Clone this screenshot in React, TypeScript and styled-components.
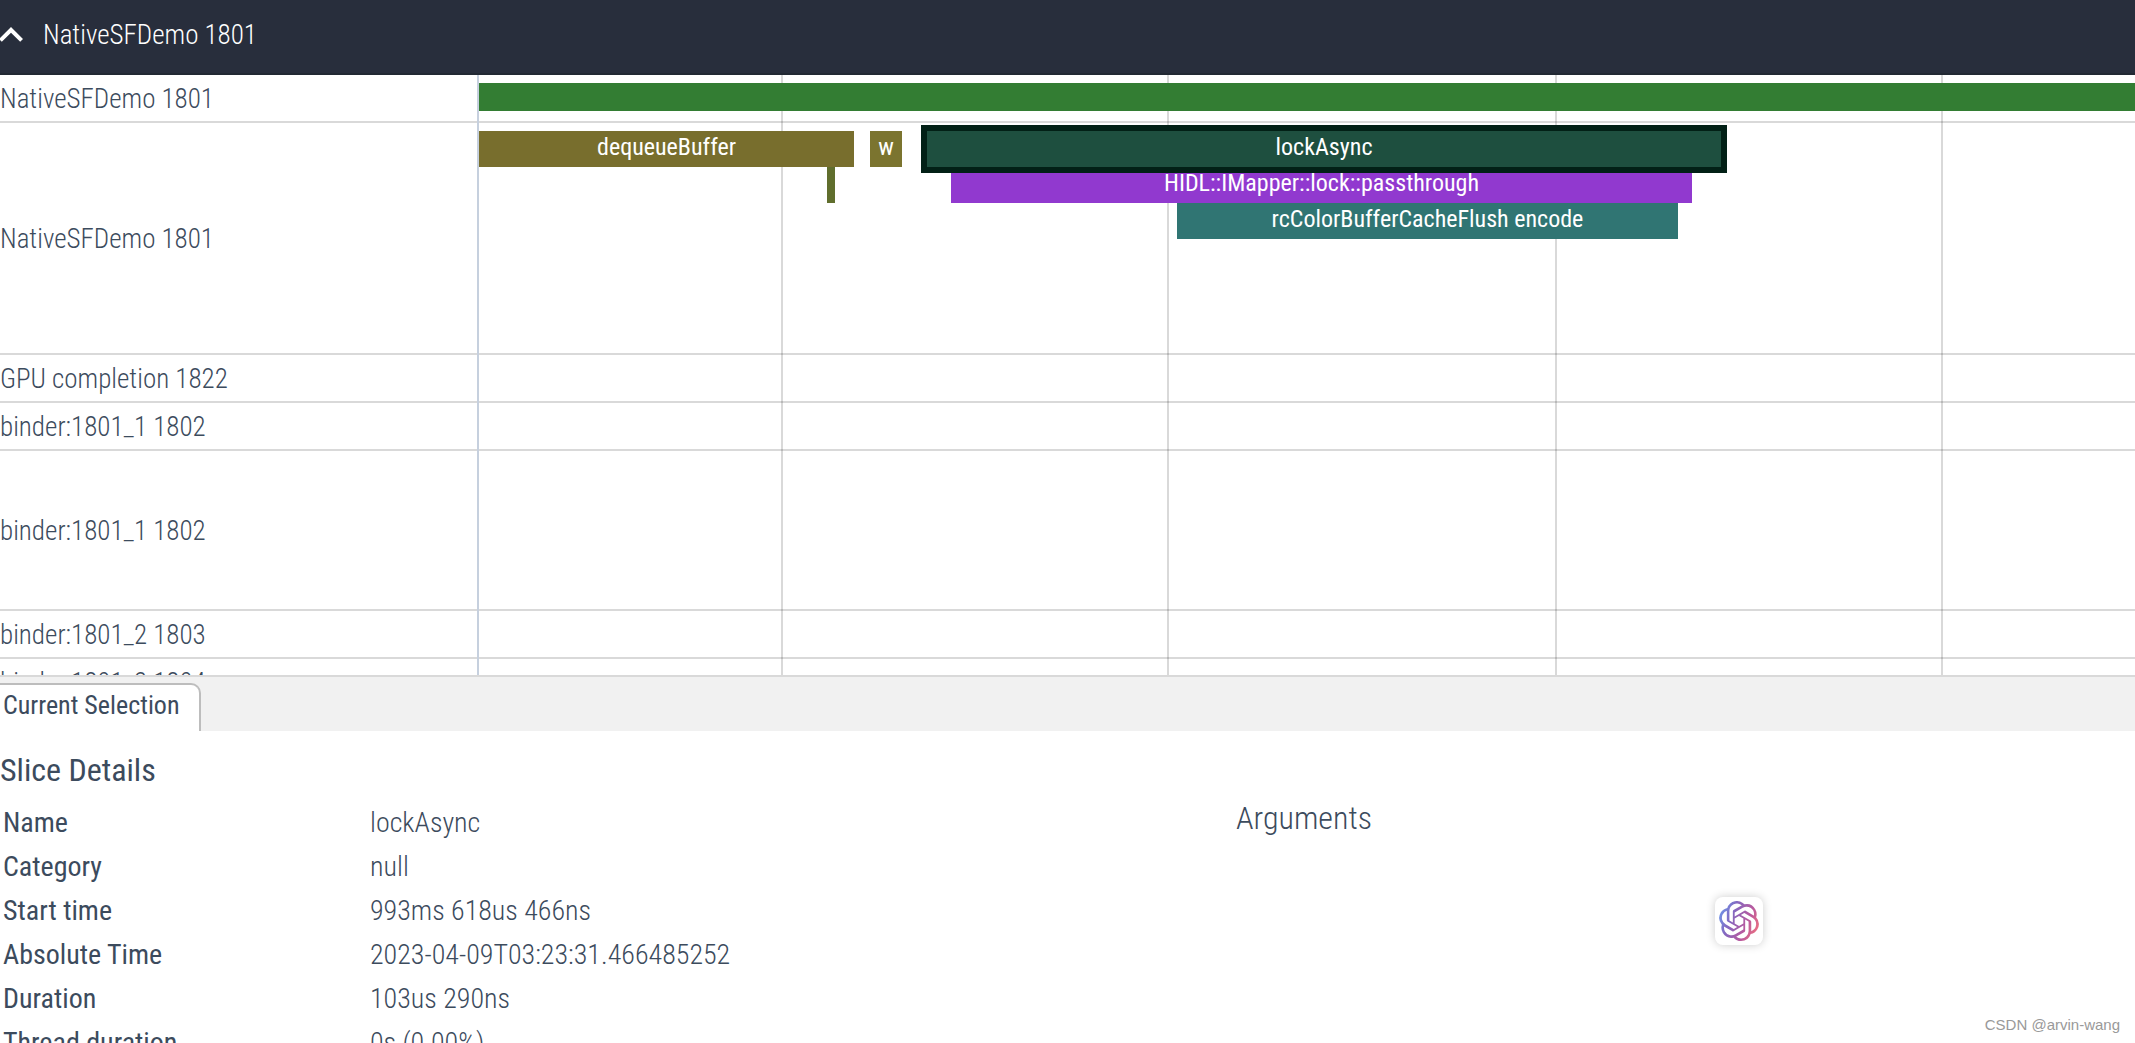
import React from "react";
import styled, { createGlobalStyle } from "styled-components";
import { MdExpandLess } from "react-icons/md";
import { SiOpenai } from "react-icons/si";

const GlobalStyle = createGlobalStyle`
  *, *::before, *::after { box-sizing: border-box; }
  body {
    margin: 0;
    background: #fff;
    color: #3c4b5d;
    font-family: "Roboto Condensed", Roboto, "Liberation Sans", sans-serif;
  }
`;

/* Time units covered by the visible part of the timeline. */
const SPAN = 1656;
const pct = (v: number) => `${(v / SPAN) * 100}%`;

interface SliceData {
  name: string;
  start: number;
  end: number;
  depth: number;
  color: string;
  selected?: boolean;
}

interface TrackData {
  id: string;
  name: string;
  height: number;
  running?: boolean;
  slices?: SliceData[];
}

const GRID = [303, 689, 1077, 1463];

const TRACKS: TrackData[] = [
  { id: "state", name: "NativeSFDemo 1801", height: 48, running: true },
  {
    id: "slices",
    name: "NativeSFDemo 1801",
    height: 232,
    slices: [
      { name: "dequeueBuffer", start: 0, end: 375, depth: 0, color: "#786e2d" },
      { name: "", start: 348, end: 356, depth: 1, color: "#606e2d" },
      { name: "w", start: 391, end: 423, depth: 0, color: "#7b742f" },
      { name: "HIDL::IMapper::lock::passthrough", start: 472, end: 1213, depth: 1, color: "#9139cf" },
      { name: "rcColorBufferCacheFlush encode", start: 698, end: 1199, depth: 2, color: "#307573" },
      { name: "lockAsync", start: 448, end: 1242, depth: 0, color: "#1e4f3f", selected: true },
    ],
  },
  { id: "gpu", name: "GPU completion 1822", height: 48 },
  { id: "b1", name: "binder:1801_1 1802", height: 48 },
  { id: "b1s", name: "binder:1801_1 1802", height: 160 },
  { id: "b2", name: "binder:1801_2 1803", height: 48 },
  { id: "b3", name: "binder:1801_3 1804", height: 48 },
];

const DETAILS: [string, string][] = [
  ["Name", "lockAsync"],
  ["Category", "null"],
  ["Start time", "993ms 618us 466ns"],
  ["Absolute Time", "2023-04-09T03:23:31.466485252"],
  ["Duration", "103us 290ns"],
  ["Thread duration", "0s (0.00%)"],
];

const Page = styled.div`
  position: relative;
  display: flex;
  flex-direction: column;
  height: 100vh;
  overflow: hidden;
`;

const GroupHeader = styled.button`
  flex: none;
  display: flex;
  align-items: center;
  gap: 8px;
  height: 75px;
  padding: 0 0 4px;
  border: 0;
  border-bottom: 2px solid #222933;
  background: #282e3c;
  color: #fff;
  font: 300 27px/32px "Roboto Condensed", Roboto, sans-serif;
  text-align: left;
  overflow: hidden;

  svg {
    flex: none;
    width: 48px;
    height: 48px;
    margin-left: -13px;
  }
`;

const Tracks = styled.main`
  position: relative;
  flex: 1;
  min-height: 0;
  overflow: hidden;
`;

const Track = styled.section<{ $height: number }>`
  display: grid;
  grid-template-columns: 479px 1fr;
  height: ${(p) => p.$height}px;
  border-bottom: 2px solid rgba(0, 0, 0, 0.15);
`;

const TrackName = styled.h2`
  display: flex;
  align-items: center;
  margin: 0;
  padding-top: 2px;
  font-size: 27px;
  font-weight: 300;
  line-height: 32px;
  white-space: nowrap;
`;

const Lane = styled.div`
  position: relative;
  padding-top: 8px;
`;

const Running = styled.div`
  position: relative;
  height: 28px;
  background: #337d33;
`;

const Slice = styled.div<{ $depth: number; $color: string; $selected?: boolean }>`
  position: absolute;
  top: ${(p) => 8 + p.$depth * 36}px;
  height: 36px;
  background: ${(p) => p.$color};
  box-shadow: ${(p) => (p.$selected ? "0 0 0 6px #022016" : "none")};
  color: #fff;
  font-size: 24px;
  line-height: 32px;
  text-align: center;
  white-space: nowrap;
  overflow: hidden;
`;

const GridLayer = styled.div`
  position: absolute;
  inset: 0 0 0 477px;
  border-left: 2px solid #c6d0de;
  pointer-events: none;
`;

const GridLine = styled.i`
  position: absolute;
  top: 0;
  bottom: 0;
  width: 2px;
  margin-left: -1px;
  background: rgba(0, 0, 0, 0.15);
`;

const DetailsPanel = styled.section`
  flex: none;
  height: 368px;
  border-top: 2px solid #d9d9d9;
  overflow: hidden;
`;

const TabBar = styled.div`
  display: flex;
  align-items: flex-end;
  height: 54px;
  background: #f1f1f1;
`;

const Tab = styled.button`
  height: 48px;
  padding: 0 19px 6px 3px;
  border: 2px solid #bdbdbd;
  border-width: 2px 2px 0 0;
  border-radius: 0 10px 0 0;
  background: #fff;
  color: inherit;
  font: 400 26px/32px "Roboto Condensed", Roboto, sans-serif;
`;

const PanelBody = styled.div`
  display: grid;
  grid-template-columns: 1236fr 899fr;
  padding-top: 19px;
`;

const Heading = styled.h3<{ $light?: boolean }>`
  margin: 0;
  padding-top: ${(p) => (p.$light ? 48 : 0)}px;
  font-size: 32px;
  font-weight: ${(p) => (p.$light ? 300 : 400)};
  line-height: 40px;
`;

const DetailsTable = styled.table`
  width: 100%;
  margin-top: 11px;
  border-collapse: collapse;
  table-layout: fixed;
  font-size: 28px;
  line-height: 44px;
  text-align: left;

  th {
    width: 370px;
    padding: 0 0 0 3px;
    font-weight: 400;
  }

  td {
    padding: 0;
    font-weight: 300;
  }
`;

const Assistant = styled.button`
  position: absolute;
  right: 372px;
  bottom: 98px;
  display: grid;
  place-items: center;
  width: 48px;
  height: 48px;
  padding: 0;
  border: 0;
  border-radius: 8px;
  background: #fff;
  box-shadow: 0 0 10px rgba(0, 0, 0, 0.2);
`;

const Watermark = styled.span`
  position: absolute;
  right: 15px;
  bottom: 8px;
  color: #999;
  font: 15px/20px "Liberation Sans", Arial, sans-serif;
`;

export default function App() {
  return (
    <Page>
      <GlobalStyle />
      <GroupHeader>
        <MdExpandLess />
        NativeSFDemo 1801
      </GroupHeader>
      <Tracks>
        <GridLayer>
          {GRID.map((g) => (
            <GridLine key={g} style={{ left: pct(g) }} />
          ))}
        </GridLayer>
        {TRACKS.map((t) => (
          <Track key={t.id} $height={t.height}>
            <TrackName>{t.name}</TrackName>
            <Lane>
              {t.running && <Running />}
              {t.slices?.map((s) => (
                <Slice
                  key={s.start}
                  $depth={s.depth}
                  $color={s.color}
                  $selected={s.selected}
                  style={{ left: pct(s.start), width: pct(s.end - s.start) }}
                >
                  {s.name}
                </Slice>
              ))}
            </Lane>
          </Track>
        ))}
      </Tracks>
      <DetailsPanel>
        <TabBar>
          <Tab>Current Selection</Tab>
        </TabBar>
        <PanelBody>
          <div>
            <Heading>Slice Details</Heading>
            <DetailsTable>
              <tbody>
                {DETAILS.map(([k, v]) => (
                  <tr key={k}>
                    <th scope="row">{k}</th>
                    <td>{v}</td>
                  </tr>
                ))}
              </tbody>
            </DetailsTable>
          </div>
          <Heading $light>Arguments</Heading>
        </PanelBody>
      </DetailsPanel>
      <Assistant aria-label="Assistant">
        <svg width="0" height="0" style={{ position: "absolute" }}>
          <defs>
            <linearGradient id="petals" x1="0" y1="0.3" x2="1" y2="0.7">
              <stop offset="0" stopColor="#6f93e6" />
              <stop offset="0.3" stopColor="#8468c0" />
              <stop offset="0.7" stopColor="#b95a9e" />
              <stop offset="1" stopColor="#ec6f80" />
            </linearGradient>
          </defs>
        </svg>
        <SiOpenai size={40} fill="url(#petals)" />
      </Assistant>
      <Watermark>CSDN @arvin-wang</Watermark>
    </Page>
  );
}
